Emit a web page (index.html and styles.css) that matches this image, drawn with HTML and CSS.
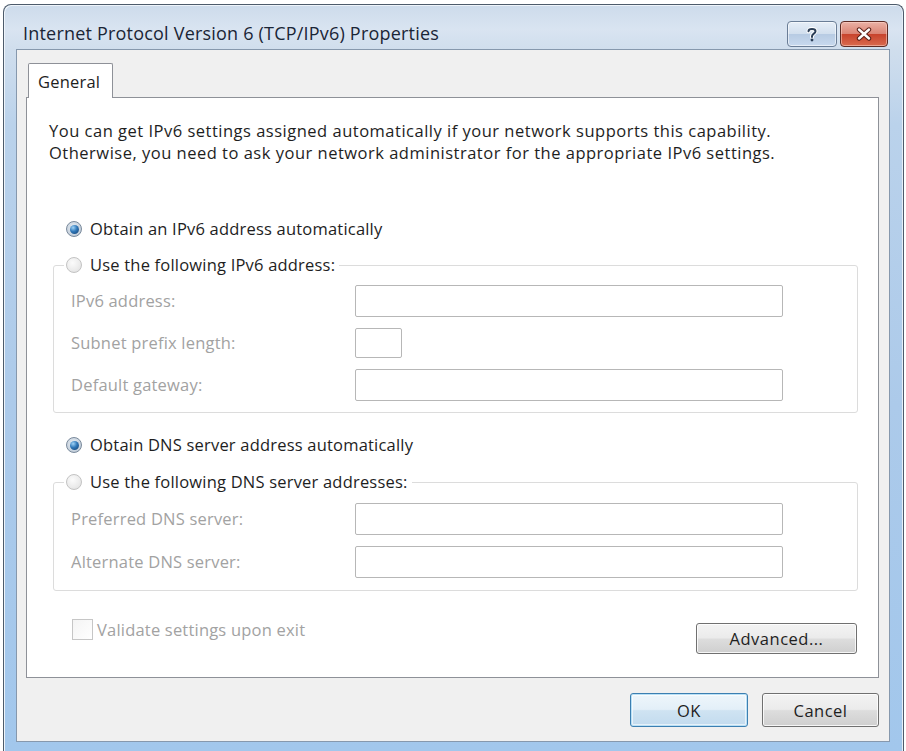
FILE: index.html
```html
<!DOCTYPE html>
<html>
<head>
<meta charset="utf-8">
<title>Internet Protocol Version 6 (TCP/IPv6) Properties</title>
<link rel="stylesheet" href="styles.css">
</head>
<body>
<div class="window">
  <div class="titlebar">
    <div class="title">Internet Protocol Version 6 (TCP/IPv6) Properties</div>
    <div class="caption-buttons">
      <div class="cap-btn help">
        <svg width="12" height="15" viewBox="0 0 12 15">
          <path d="M2.5 4.2 C2.5 1.2 9.5 1.2 9.5 4.2 C9.5 6.6 6 6.6 6 9.2 V10" fill="none" stroke="#fff" stroke-width="4" stroke-linecap="round"/>
          <path d="M2.5 4.2 C2.5 1.2 9.5 1.2 9.5 4.2 C9.5 6.6 6 6.6 6 9.2 V10" fill="none" stroke="#2b3e57" stroke-width="2" stroke-linecap="round"/>
          <circle cx="6" cy="13" r="1.4" fill="#2b3e57"/>
        </svg>
      </div>
      <div class="cap-btn close">
        <svg width="16" height="14" viewBox="0 0 16 14">
          <path d="M3 2.5 L13 11.5 M13 2.5 L3 11.5" stroke="#5a2018" stroke-width="4.4" stroke-linecap="round"/>
          <path d="M3 2.5 L13 11.5 M13 2.5 L3 11.5" stroke="#ffffff" stroke-width="2.4" stroke-linecap="round"/>
        </svg>
      </div>
    </div>
  </div>
  <div class="client">
    <div class="tabs">
      <div class="tab">General</div>
    </div>
    <div class="panel">
      <p class="desc">You can get IPv6 settings assigned automatically if your network supports this capability.<br>Otherwise, you need to ask your network administrator for the appropriate IPv6 settings.</p>

      <div class="option first">
        <span class="radio on"><span class="dot"></span></span>
        <span class="opt-text">Obtain an IPv6 address automatically</span>
      </div>

      <fieldset class="group group-ip">
        <legend class="legend">
          <span class="radio"></span>
          <span class="opt-text">Use the following IPv6 address:</span>
        </legend>
        <div class="fields">
          <span class="label">IPv6 address:</span><span class="input"></span>
          <span class="label">Subnet prefix length:</span><span class="input small"></span>
          <span class="label">Default gateway:</span><span class="input"></span>
        </div>
      </fieldset>

      <div class="option second">
        <span class="radio on"><span class="dot"></span></span>
        <span class="opt-text">Obtain DNS server address automatically</span>
      </div>

      <fieldset class="group group-dns">
        <legend class="legend">
          <span class="radio"></span>
          <span class="opt-text">Use the following DNS server addresses:</span>
        </legend>
        <div class="fields">
          <span class="label">Preferred DNS server:</span><span class="input"></span>
          <span class="label">Alternate DNS server:</span><span class="input"></span>
        </div>
      </fieldset>

      <div class="bottom-row">
        <div class="check">
          <span class="box"></span>
          <span class="check-text">Validate settings upon exit</span>
        </div>
        <div class="btn advanced">Advanced...</div>
      </div>
    </div>
    <div class="actions">
      <div class="btn ok">OK</div>
      <div class="btn cancel">Cancel</div>
    </div>
  </div>
</div>
</body>
</html>
```

FILE: styles.css
```css
* {
  box-sizing: border-box;
}

html, body {
  margin: 0;
  padding: 0;
  background: #ffffff;
}

body {
  font-family: "Open Sans", "Noto Sans", "Liberation Sans", sans-serif;
  font-size: 16.5px;
  letter-spacing: 0.5px;
  color: #1e1e1e;
}

.window {
  margin: 4px 0 0 3px;
  width: 901px;
  height: 747px;
  border: 1px solid #4d5b6b;
  border-bottom: 0;
  border-radius: 8px 8px 0 0;
  background: linear-gradient(to bottom, #cddbeb 0px, #d9e4f1 24px, #d0deed 44px, #bad2eb 120px, #accaea 400px, #a2c7ec 100%);
  box-shadow: inset 1px 1px 0 #eef4fa, inset -1px 0 0 #e6eef7;
  padding-bottom: 9px;
  display: flex;
  flex-direction: column;
}

.titlebar {
  height: 44px;
  padding: 0 15px 0 19px;
  display: flex;
  justify-content: space-between;
  align-items: flex-start;
}

.title {
  margin-top: 16px;
  font-size: 18px;
  line-height: 24px;
  letter-spacing: 0.2px;
  color: #1a2536;
  white-space: nowrap;
}

.caption-buttons {
  display: flex;
  gap: 3px;
  margin-top: 16px;
}

.cap-btn {
  height: 26px;
  display: flex;
  align-items: center;
  justify-content: center;
  border-radius: 4px;
}

.help {
  width: 50px;
  border: 1px solid #6a7d96;
  background: linear-gradient(to bottom, #e6eef7 0%, #d2dfee 48%, #b7cbe3 52%, #c8d9ee 100%);
  box-shadow: inset 0 0 0 1px rgba(255, 255, 255, 0.55);
}

.close {
  width: 48px;
  border: 1px solid #5d2b24;
  background: linear-gradient(to bottom, #eab1a5 0%, #db8575 48%, #c8442d 52%, #d96a4e 100%);
  box-shadow: inset 0 0 0 1px rgba(255, 220, 210, 0.5);
}

.client {
  margin: 0 13px 0 12px;
  flex: 1;
  background: #f0f0f0;
  border: 1px solid #8698ad;
  padding: 13px 10px 13px 9px;
  display: flex;
  flex-direction: column;
}

.tabs {
  display: flex;
  height: 34px;
}

.tab {
  margin-left: 2px;
  width: 85px;
  height: 35px;
  padding-left: 9px;
  line-height: 36px;
  letter-spacing: 0.2px;
  background: #ffffff;
  border: 1px solid #8e9198;
  border-bottom: 0;
  border-radius: 2px 2px 0 0;
  position: relative;
  z-index: 1;
  color: #1e1e1e;
}

.panel {
  height: 581px;
  background: #ffffff;
  border: 1px solid #8e9198;
  display: flex;
  flex-direction: column;
}

.desc {
  margin: 22px 0 0 22px;
  line-height: 22px;
  color: #1e1e1e;
}

.option {
  display: flex;
  align-items: center;
  height: 22px;
  padding-left: 39px;
}

.option.first {
  margin-top: 54px;
}

.option.second {
  margin-top: 21px;
}

.radio {
  width: 16px;
  height: 16px;
  border-radius: 50%;
  margin-right: 8px;
  flex: none;
  display: flex;
  align-items: center;
  justify-content: center;
  border: 1px solid #c3c3c3;
  background: radial-gradient(circle at 40% 35%, #fbfbfb 0%, #ececec 55%, #dcdcdc 100%);
}

.radio.on {
  border: 1px solid #7a8a9c;
  background: radial-gradient(circle at 45% 40%, #e8eef4 0%, #c4cfdb 70%, #aeb9c6 100%);
}

.dot {
  width: 9px;
  height: 9px;
  border-radius: 50%;
  background: radial-gradient(circle at 35% 30%, #9fd3f7 0%, #2f77b8 45%, #123d6d 100%);
}

.opt-text {
  line-height: 22px;
  letter-spacing: 0.2px;
  white-space: nowrap;
}

.group {
  margin: 14px 20px 0 26px;
  border: 1px solid #dcdcdc;
  border-radius: 3px;
  padding: 9px 0 11px 10px;
  min-width: 0;
}

.group-dns {
  margin-top: 15px;
  padding-top: 10px;
  padding-bottom: 12px;
}

.legend {
  display: flex;
  align-items: center;
  height: 22px;
  padding: 0 4px 0 2px;
}

.fields {
  margin-left: 7px;
  display: grid;
  grid-template-columns: 284px 428px;
  row-gap: 11px;
  align-items: center;
}

.label {
  color: #a2a2a2;
  line-height: 22px;
  letter-spacing: 0.2px;
  white-space: nowrap;
}

.input {
  display: block;
  width: 428px;
  height: 32px;
  border: 1px solid #b7b7b7;
  border-radius: 2px;
  background: #ffffff;
}

.input.small {
  width: 47px;
  height: 30px;
}

.bottom-row {
  margin: 28px 21px 0 45px;
  display: flex;
  justify-content: space-between;
  align-items: flex-start;
}

.check {
  display: flex;
  align-items: center;
  height: 21px;
}

.box {
  width: 21px;
  height: 21px;
  border: 1px solid #c6c6c6;
  background: linear-gradient(to bottom right, #f4f4f4, #ffffff);
  margin-right: 4px;
}

.check-text {
  color: #a2a2a2;
  line-height: 22px;
  letter-spacing: 0.2px;
  white-space: nowrap;
}

.btn {
  height: 34px;
  display: flex;
  align-items: center;
  justify-content: center;
  border: 1px solid #707070;
  border-radius: 3px;
  background: linear-gradient(to bottom, #f3f3f3 0%, #ebebeb 48%, #dddddd 52%, #cfcfcf 100%);
  box-shadow: inset 0 0 0 1px rgba(255, 255, 255, 0.8);
  color: #1e1e1e;
  white-space: nowrap;
}

.advanced {
  width: 161px;
  height: 31px;
  margin-top: 4px;
}

.actions {
  margin-top: 15px;
  display: flex;
  justify-content: flex-end;
  gap: 14px;
}

.ok {
  width: 118px;
  border: 1px solid #3c7fb1;
  box-shadow: inset 0 0 0 1px #b9e0f6, inset 0 0 0 2px rgba(255, 255, 255, 0.6);
  background: linear-gradient(to bottom, #eef6fb 0%, #e3eff8 48%, #cfe3f2 52%, #c2dbee 100%);
}

.cancel {
  width: 117px;
}
```
